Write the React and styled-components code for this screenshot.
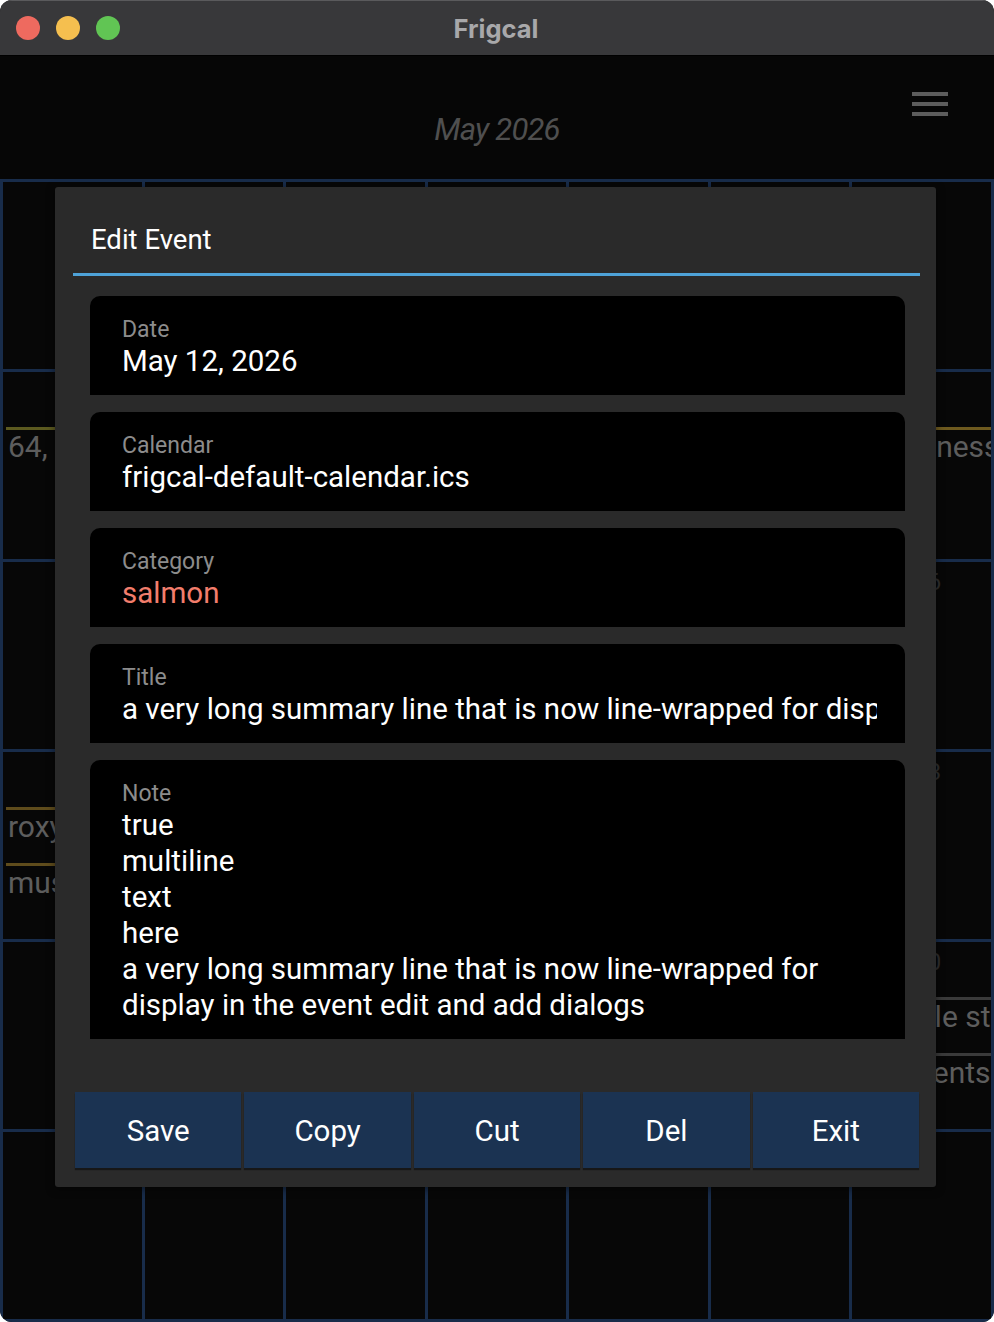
import React from "react";
import styled, { createGlobalStyle } from "styled-components";

const GlobalStyle = createGlobalStyle`
  html, body {
    margin: 0;
    padding: 0;
    background: #ffffff;
  }
  * {
    box-sizing: border-box;
  }
`;

const events = {
  7: [{ text: "64, annual checkup", color: "#5c5a20" }],
  13: [{ text: "Happiness day", color: "#6e5a1f" }],
  21: [
    { text: "roxy music", color: "#5f4c1c" },
    { text: "museum trip", color: "#5f4c1c" },
  ],
  34: [
    { text: "Trouble stuff", color: "#3a3a3a" },
    { text: "Payments due", color: "#3a3a3a" },
  ],
};

const dayOf = (i) => {
  // grid starts on Sunday, April 26
  if (i < 5) return 26 + i;
  const d = i - 4;
  return d > 31 ? d - 31 : d;
};

const App = () => {
  return (
    <>
      <GlobalStyle />
      <Window>
        <TitleBar>
          <Lights>
            <Light color="#ee6a5f" />
            <Light color="#f5bf4f" />
            <Light color="#61c554" />
          </Lights>
          <WindowTitle>Frigcal</WindowTitle>
        </TitleBar>

        <AppBody>
          <MonthHeader>
            <MonthLabel>May 2026</MonthLabel>
            <MenuButton>
              <Bar />
              <Bar />
              <Bar />
            </MenuButton>
          </MonthHeader>

          <Grid>
            {Array(42)
              .fill()
              .map((_, i) => (
                <Cell key={i}>
                  <DayNumber>{dayOf(i)}</DayNumber>
                  {(events[i] || []).map((ev, j) => (
                    <Event key={j} color={ev.color}>
                      {ev.text}
                    </Event>
                  ))}
                </Cell>
              ))}
          </Grid>

          <Dialog>
            <DialogTitle>Edit Event</DialogTitle>
            <Divider />
            <Fields>
              <Field>
                <Label>Date</Label>
                <Value>May 12, 2026</Value>
              </Field>
              <Field>
                <Label>Calendar</Label>
                <Value>frigcal-default-calendar.ics</Value>
              </Field>
              <Field>
                <Label>Category</Label>
                <Value color="#f27d6c">salmon</Value>
              </Field>
              <Field>
                <Label>Title</Label>
                <Value nowrap>
                  a very long summary line that is now line-wrapped for display
                  in the event edit and add dialogs
                </Value>
              </Field>
              <Field>
                <Label>Note</Label>
                <NoteText>
                  {"true\nmultiline\ntext\nhere\na very long summary line that is now line-wrapped for display in the event edit and add dialogs"}
                </NoteText>
              </Field>
            </Fields>
            <ButtonRow>
              <ActionButton>Save</ActionButton>
              <ActionButton>Copy</ActionButton>
              <ActionButton>Cut</ActionButton>
              <ActionButton>Del</ActionButton>
              <ActionButton>Exit</ActionButton>
            </ButtonRow>
          </Dialog>
        </AppBody>
      </Window>
    </>
  );
};

const Window = styled.div`
  width: 994px;
  height: 1322px;
  border-radius: 12px;
  overflow: hidden;
  background: #070707;
  display: flex;
  flex-direction: column;
  font-family: Roboto, "Noto Sans", sans-serif;
`;

const TitleBar = styled.div`
  height: 56px;
  flex-shrink: 0;
  background: #38383a;
  border-top: 1px solid #5a5a5c;
  border-bottom: 1px solid #000;
  display: flex;
  align-items: center;
  justify-content: center;
  position: relative;
`;

const Lights = styled.div`
  position: absolute;
  left: 16px;
  top: 15px;
  display: flex;
  gap: 16px;
`;

const Light = styled.span`
  width: 24px;
  height: 24px;
  border-radius: 50%;
  background: ${(p) => p.color};
`;

const WindowTitle = styled.div`
  font-family: Inter, "Liberation Sans", sans-serif;
  font-weight: 700;
  font-size: 25.5px;
  color: #a8a8aa;
  margin-right: 2px;
`;

const AppBody = styled.div`
  flex: 1;
  position: relative;
  display: flex;
  flex-direction: column;
`;

const MonthHeader = styled.div`
  height: 123px;
  flex-shrink: 0;
  background: #060606;
  display: flex;
  align-items: center;
  justify-content: center;
  position: relative;
  padding-top: 24px;
`;

const MonthLabel = styled.div`
  font-style: italic;
  font-size: 31px;
  letter-spacing: -0.8px;
  color: #4f4f4f;
`;

const MenuButton = styled.div`
  position: absolute;
  right: 46px;
  top: 36px;
  display: flex;
  flex-direction: column;
  gap: 6px;
`;

const Bar = styled.span`
  display: block;
  width: 36px;
  height: 4px;
  background: #5c5c5c;
`;

const Grid = styled.div`
  flex: 1;
  display: grid;
  grid-template-columns: repeat(7, 1fr);
  grid-template-rows: repeat(6, 1fr);
  gap: 3px;
  padding: 3px;
  background: #182c4a;
`;

const Cell = styled.div`
  background: #070707;
  overflow: hidden;
  min-width: 0;
`;

const DayNumber = styled.div`
  height: 55px;
  line-height: 40px;
  padding-left: 12px;
  text-align: center;
  font-size: 24px;
  color: #2e2e2e;
`;

const Event = styled.div`
  margin: 0 0 19px 3px;
  padding-left: 2px;
  border-top: 3px solid ${(p) => p.color};
  font-size: 30px;
  line-height: 34px;
  color: #5d5d5d;
  white-space: nowrap;
`;

const Dialog = styled.div`
  position: absolute;
  left: 55px;
  top: 131px;
  width: 881px;
  background: #2a2a2a;
  border-radius: 3px;
  box-shadow: 0 2px 8px rgba(0, 0, 0, 0.5);
  padding-bottom: 19px;
`;

const DialogTitle = styled.div`
  padding: 36px 0 16px 36px;
  font-size: 27.5px;
  line-height: 34px;
  color: #ffffff;
`;

const Divider = styled.div`
  height: 3px;
  margin: 0 16px 0 18px;
  background: #4ea2d8;
`;

const Fields = styled.div`
  margin-top: 20px;
  padding: 0 31px 0 35px;
  display: flex;
  flex-direction: column;
  gap: 17px;
`;

const Field = styled.div`
  background: #000000;
  border-radius: 10px 10px 0 0;
  min-height: 99px;
  padding: 21px 28px 16px 32px;
`;

const Label = styled.div`
  font-size: 23px;
  line-height: 26px;
  color: #8c8c8c;
`;

const Value = styled.div`
  font-size: 29.5px;
  line-height: 36px;
  color: ${(p) => p.color || "#ffffff"};
  white-space: ${(p) => (p.nowrap ? "nowrap" : "normal")};
  overflow: hidden;
`;

const NoteText = styled.div`
  font-size: 29.5px;
  line-height: 36px;
  color: #ffffff;
  white-space: pre-wrap;
`;

const ButtonRow = styled.div`
  margin-top: 53px;
  padding: 0 17px 0 20px;
  display: flex;
  gap: 3px;
`;

const ActionButton = styled.button`
  flex: 1;
  height: 76px;
  border: none;
  border-radius: 0;
  background: #1b3352;
  box-shadow: 0 2px 1px rgba(0, 0, 0, 0.45);
  color: #ffffff;
  font-family: Roboto, "Noto Sans", sans-serif;
  font-size: 29.5px;
  padding: 2px 0 0;
`;

export default App;
